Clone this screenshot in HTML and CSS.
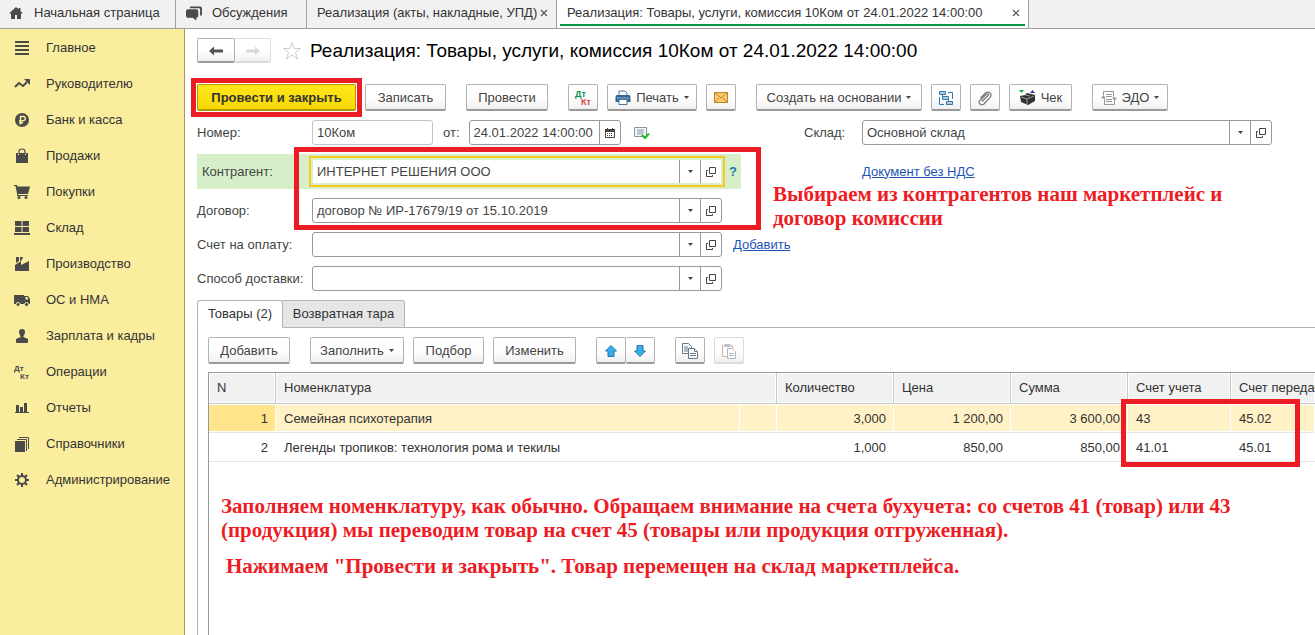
FILE: index.html
```html
<!DOCTYPE html>
<html lang="ru">
<head>
<meta charset="utf-8">
<title>Реализация: Товары, услуги, комиссия</title>
<link rel="stylesheet" href="styles.css">
</head>
<body>
<svg class="defs" aria-hidden="true">
  <symbol id="open" viewBox="0 0 10 10"><path d="M3.500.5h6v6h-6zM2 3.500H.5v6h6V8" fill="none" stroke="#444"/></symbol>
  <symbol id="down" viewBox="0 0 5 3"><path d="M0 0h5L2.500 3z" fill="#444"/></symbol>
</svg>
<nav class="tabs">
  <a class="tab tab-home" href="#"><svg class="ico" viewBox="0 0 16 16"><path d="M8 2 1 8.500h2V14h4v-4h2v4h4V8.500h2L12.500 6V3h-2v1.300z"/></svg>Начальная страница</a>
  <a class="tab tab-talk" href="#"><svg class="ico" viewBox="0 0 17 16"><path d="M5 1h10q2 0 2 2v6q0 2-2 2V4q0-1-1-1H4q0-2 1-2z"/><path d="M2 4h9q2 0 2 2v5q0 2-2 2v3l-4-3H2q-2 0-2-2V6q0-2 2-2z"/></svg>Обсуждения</a>
  <div class="tab tab-list"><a href="#">Реализация (акты, накладные, УПД)</a><button class="close" aria-label="Закрыть"><svg viewBox="0 0 8 8"><path d="m1 1 6 6M7 1 1 7" stroke="#555" stroke-width="1.200"/></svg></button></div>
  <div class="tab tab-active"><a href="#">Реализация: Товары, услуги, комиссия 10Ком от 24.01.2022 14:00:00</a><button class="close" aria-label="Закрыть"><svg viewBox="0 0 8 8"><path d="m1 1 6 6M7 1 1 7" stroke="#555" stroke-width="1.200"/></svg></button></div>
</nav>
<div class="shell">
  <nav class="side">
    <a href="#"><svg class="ico" viewBox="0 0 16 16"><path d="M1 1h14v2H1zM1 5h14v2H1zM1 9h14v2H1zM1 13h14v2H1z"/></svg>Главное</a>
    <a href="#"><svg class="ico" viewBox="0 0 16 16"><path d="m1 11 4-4 4 3 4-4" fill="none" stroke="#4a4a4a" stroke-width="2"/><path d="M10 3h6v6z"/></svg>Руководителю</a>
    <a href="#"><svg class="ico" viewBox="0 0 16 16"><circle cx="8" cy="8" r="7"/><path d="M6.500 12.500V4.500h2.700a2 2 0 0 1 0 4.200H5M5 10.700h4" fill="none" stroke="#fbed9e" stroke-width="1.400"/></svg>Банк и касса</a>
    <a href="#"><svg class="ico" viewBox="0 0 16 16"><path d="M2 5h2v2h1V5h6v2h1V5h2v10H2z"/><path d="M5 6V3.500q0-2.500 3-2.500t3 2.500V6" fill="none" stroke="#4a4a4a" stroke-width="1.200"/></svg>Продажи</a>
    <a href="#"><svg class="ico" viewBox="0 0 16 16"><path d="M0 1h3l.5 1.500H16L14 10H4v1h10v1H3V9.500L1.500 2H0z"/><circle cx="5" cy="13.500" r="1.500"/><circle cx="12" cy="13.500" r="1.500"/></svg>Покупки</a>
    <a href="#"><svg class="ico" viewBox="0 0 16 16"><path d="M1 1h6.500v5H1zM8.500 1H15v5H8.500zM1 7h6.500v5H1zM8.500 7H15v5H8.500zM0 13h16v2H0z"/></svg>Склад</a>
    <a href="#"><svg class="ico" viewBox="0 0 16 16"><path d="M1 15V9l6-4v4l8-4v10zM2 1h3v4L2 7zM6 1h3l-1 3-2 1z"/></svg>Производство</a>
    <a href="#"><svg class="ico" viewBox="0 0 16 16"><path d="M0 3h10v9H0z"/><path fill-rule="evenodd" d="M10 4h4l2 3v5h-6zm1.500 1v2.500h3L13.300 5z"/><g stroke="#fbed9e"><circle cx="4" cy="12.500" r="2"/><circle cx="12.500" cy="12.500" r="2"/></g></svg>ОС и НМА</a>
    <a href="#"><svg class="ico" viewBox="0 0 16 16"><path d="M8 1q3 0 3 3 0 2-1.500 4v1L14 11v3q0 1-1 1H3q-1 0-1-1v-3l4.500-2V8Q5 6 5 4q0-3 3-3z"/></svg>Зарплата и кадры</a>
    <a href="#"><svg class="ico dk" viewBox="0 0 16 16"><text x="0" y="7">Дт</text><text x="6" y="15">Кт</text></svg>Операции</a>
    <a href="#"><svg class="ico" viewBox="0 0 16 16"><path d="M2 5h3v7h1V7h3v5h1V3h3v9h2v1H1v-1h1z"/></svg>Отчеты</a>
    <a href="#"><svg class="ico" viewBox="0 0 16 16"><path d="M1 5h10v11H1z"/><path d="M3 3.500h9.500V15M5 1.500h9.500V13" fill="none" stroke="#4a4a4a"/></svg>Справочники</a>
    <a href="#"><svg class="ico" viewBox="0 0 16 16"><circle cx="8" cy="8" r="4" fill="none" stroke="#4a4a4a" stroke-width="2"/><path d="M8 1v3M8 12v3M1 8h3M12 8h3M3 3l2 2M11 11l2 2M13 3l-2 2M5 11l-2 2" stroke="#4a4a4a" stroke-width="2"/></svg>Администрирование</a>
  </nav>
  <main class="main">
    <header class="head">
      <div class="pair"><button class="btn nav-btn" aria-label="Назад"><svg width="14" height="10" viewBox="0 0 14 10"><path d="M0 5 5 .5v3h9v3H5v3z" fill="#555"/></svg></button><button class="btn nav-btn" disabled aria-label="Вперед"><svg width="14" height="10" viewBox="0 0 14 10"><path d="M14 5 9 .5v3H0v3h9v3z" fill="#d8d8d8"/></svg></button></div>
      <svg class="star" viewBox="0 0 20 20"><path d="m10 1.500 2.300 6h6.200l-5 4 2 6.500L10 14l-5.500 4 2-6.500-5-4h6.200z" fill="#fff" stroke="#ccc"/></svg>
      <h1>Реализация: Товары, услуги, комиссия 10Ком от 24.01.2022 14:00:00</h1>
    </header>
    <div class="bar">
      <span class="marked"><button class="btn primary">Провести и закрыть</button></span>
      <button class="btn w81">Записать</button>
      <button class="btn w82 apart">Провести</button>
      <button class="btn w30 apart" aria-label="Дт Кт"><svg class="dk color" width="18" height="18" viewBox="0 0 18 18"><text x="1" y="8" fill="#0a9150">Дт</text><text x="7" y="16" fill="#dd4444">Кт</text></svg></button>
      <button class="btn w90"><svg width="16" height="16" viewBox="0 0 16 16"><path d="M4 6V1h6l2 2v3" fill="#fff" stroke="#47729a"/><path d="M2 5h12q1.500 0 1.500 2v5H.5V7Q.5 5 2 5z" fill="#39658f"/><path d="M2 8h12" stroke="#88b5da"/><path d="M4 9.500h8v5H4z" fill="#fff" stroke="#47729a"/></svg>Печать<svg class="caret"><use href="#down"/></svg></button>
      <button class="btn w30" aria-label="Письмо"><svg width="14" height="11" viewBox="0 0 14 11"><path d="M.5.5h13v10H.5z" fill="#f8cb72" stroke="#c58220"/><path d="m1 1 6 5 6-5M1 10l4-4M13 10 9 6" fill="none" stroke="#c58220"/></svg></button>
      <button class="btn w166 apart">Создать на основании<svg class="caret"><use href="#down"/></svg></button>
      <button class="btn w30" aria-label="Структура"><svg width="16" height="16" viewBox="0 0 16 16" fill="#aecde3" stroke="#3679a5"><path d="M1.500 1.500h6v3h-6zM4.500 6.500h6v3h-6zM8.500 11.500h6v3h-6z"/><path d="M10 2.500h4.500V9M1.500 7v7.500H6M4.500 4.500v2M10.500 9.500v2" fill="none"/></svg></button>
      <button class="btn w30" aria-label="Файлы"><svg width="16" height="16" viewBox="0 0 16 16"><path d="m5 11 6-6q1-1 0-1.500T9 4l-6 6q-2 2 0 3.500t4 0l6-6.500q2-3 0-4.500T9 2L3.500 7.500" transform="translate(0 .5)" fill="none" stroke="#777" stroke-width="1.200"/></svg></button>
      <button class="btn w63"><svg width="17" height="16" viewBox="0 0 17 16"><path d="M0 0h5L2.500 3z" fill="#15a34a"/><path d="m11 3 2.500-3L16 3z" fill="#303da8"/><path d="m1 6 5-1 2-2 8 2v6l-7 4-7-3z" fill="#333"/><path d="m2 7 6 2 7-3M8 9v5M6 5l5 1" fill="none" stroke="#999"/></svg>Чек</button>
      <button class="btn w76 apart"><svg width="16" height="16" viewBox="0 0 16 16" fill="none" stroke="#999"><path d="M2.500 5V1.500h10V7M13.500 10v4.500h-10V9M5 4.500h6M5 6.500h6M5 9.500h6M5 11.500h6"/><path d="M0 8.500h5L2.500 5zM11 7.500h5L13.500 11z" fill="#999" stroke="none"/></svg>ЭДО<svg class="caret"><use href="#down"/></svg></button>
    </div>

    <form class="form">
      <div class="row">
        <div class="half">
          <label for="num">Номер:</label>
          <div class="inline"><input id="num" class="box num" value="10Ком"><label for="date">от:</label>
            <span class="combo date"><input id="date" value="24.01.2022 14:00:00"><button type="button" aria-label="Календарь"><svg width="10" height="10" viewBox="0 0 10 10"><path d="M.5 1.500h9v8h-9z" fill="#fff" stroke="#444"/><path d="M0 1h10v3H0zM2 0h1v1H2zM7 0h1v1H7zM2 5h1v1H2zM4 5h1v1H4zM6 5h1v1H6zM2 7h1v1H2zM4 7h1v1H4zM6 7h1v1H6z" fill="#444"/></svg></button></span>
            <svg width="16" height="14" viewBox="0 0 16 14"><path d="M.5 1.500h12v9H.5zM3 4h7M3 6h7M3 8h6" fill="#f5f8fb" stroke="#8497a8"/><path d="m8 9 3 3 4-4.500" fill="none" stroke="#2bb52e" stroke-width="2"/></svg>
          </div>
        </div>
        <label class="stock-label" for="stock">Склад:</label>
        <span class="combo stock"><input id="stock" value="Основной склад"><button type="button" aria-label="Выбрать"><svg class="caret"><use href="#down"/></svg></button><button type="button" aria-label="Открыть"><svg class="open"><use href="#open"/></svg></button></span>
      </div>
      <div class="row">
        <div class="half current">
          <label for="agent">Контрагент:</label>
          <span class="combo focus"><input id="agent" value="ИНТЕРНЕТ РЕШЕНИЯ ООО"><button type="button" aria-label="Выбрать"><svg class="caret"><use href="#down"/></svg></button><button type="button" aria-label="Открыть"><svg class="open"><use href="#open"/></svg></button></span>
          <a class="help" href="#">?</a>
        </div>
        <a class="vat" href="#">Документ без НДС</a>
      </div>
      <div class="row">
        <div class="half">
          <label for="deal">Договор:</label>
          <span class="combo"><input id="deal" value="договор № ИР-17679/19 от 15.10.2019"><button type="button" aria-label="Выбрать"><svg class="caret"><use href="#down"/></svg></button><button type="button" aria-label="Открыть"><svg class="open"><use href="#open"/></svg></button></span>
        </div>
      </div>
      <div class="row">
        <div class="half">
          <label for="bill">Счет на оплату:</label>
          <span class="combo"><input id="bill"><button type="button" aria-label="Выбрать"><svg class="caret"><use href="#down"/></svg></button><button type="button" aria-label="Открыть"><svg class="open"><use href="#open"/></svg></button></span>
          <a class="add" href="#">Добавить</a>
        </div>
      </div>
      <div class="row">
        <div class="half">
          <label for="ship">Способ доставки:</label>
          <span class="combo"><input id="ship"><button type="button" aria-label="Выбрать"><svg class="caret"><use href="#down"/></svg></button><button type="button" aria-label="Открыть"><svg class="open"><use href="#open"/></svg></button></span>
        </div>
      </div>
      <div class="frame frame-form"></div>
      <p class="note note-form">Выбираем из контрагентов наш маркетплейс и<br>договор комиссии</p>
    </form>

    <div class="sheets"><button class="sheet on">Товары (2)</button><button class="sheet">Возвратная тара</button></div>
    <section class="panel">
      <div class="bar">
        <button class="btn w82">Добавить</button>
        <button class="btn w94 apart">Заполнить<svg class="caret"><use href="#down"/></svg></button>
        <button class="btn w71">Подбор</button>
        <button class="btn w83">Изменить</button>
        <div class="pair apart"><button class="btn w30" aria-label="Вверх"><svg width="12" height="12" viewBox="0 0 12 12"><path d="m6 .5 5.500 5.500H9v5.500H3V6H.5z" fill="#36aeea" stroke="#2776a8"/></svg></button><button class="btn w30" aria-label="Вниз"><svg width="12" height="12" viewBox="0 0 12 12"><path d="M6 11.500.5 6H3V.5h6V6h2.500z" fill="#36aeea" stroke="#2776a8"/></svg></button></div>
        <button class="btn w30 apart" aria-label="Копировать"><svg width="16" height="16" viewBox="0 0 16 16" fill="#fff" stroke="#66788a"><path d="M.5.5h6l3 3v7h-9zM2 4h4M2 6h4M2 8h4"/><path d="M6.500 5.500h6l3 3v7h-9z"/><path d="M12.500 5.500v3h3M8 10.500h6M8 12.500h6"/></svg></button>
        <button class="btn w30" disabled aria-label="Вставить"><svg width="16" height="16" viewBox="0 0 16 16" fill="#fff" stroke="#b0bcc6"><path d="M1.500 2.500h10v11h-10z" stroke="#dcaf94"/><path d="M4 1.500h5v2H4z" fill="#ccc"/><path d="M6.500 5.500h5l3 3v7h-8z"/><path d="M8 10.500h5M8 12.500h5"/></svg></button>
      </div>
      <div class="grid">
        <table>
          <colgroup><col class="c-n"><col><col class="c-x"><col class="c-v"><col class="c-v"><col class="c-v"><col class="c-a"><col class="c-t"></colgroup>
          <thead><tr><th>N</th><th colspan="2">Номенклатура</th><th>Количество</th><th>Цена</th><th>Сумма</th><th>Счет учета</th><th>Счет передачи</th></tr></thead>
          <tbody>
            <tr class="sel"><td class="r">1</td><td>Семейная психотерапия</td><td></td><td class="r">3,000</td><td class="r">1 200,00</td><td class="r">3 600,00</td><td>43</td><td>45.02</td></tr>
            <tr><td class="r">2</td><td>Легенды тропиков: технология рома и текилы</td><td></td><td class="r">1,000</td><td class="r">850,00</td><td class="r">850,00</td><td>41.01</td><td>45.01</td></tr>
          </tbody>
        </table>
        <div class="frame frame-grid"></div>
        <div class="note note-grid">
          <p>Заполняем номенклатуру, как обычно. Обращаем внимание на счета бухучета: со счетов 41 (товар) или 43<br>(продукция) мы переводим товар на счет 45 (товары или продукция отгруженная).</p>
          <p class="last">Нажимаем "Провести и закрыть". Товар перемещен на склад маркетплейса.</p>
        </div>
      </div>
    </section>
  </main>
</div>
</body>
</html>
```

FILE: styles.css
```css
* { box-sizing: border-box; }
body {
  margin: 0;
  min-height: 100vh;
  display: flex;
  flex-direction: column;
  overflow-x: hidden;
  background: #fff;
  color: #333;
  font: 13px/16px "Liberation Sans", Arial, sans-serif;
}
button, input { font: inherit; color: inherit; margin: 0; }
p, h1 { margin: 0; }
svg { flex: none; }
.defs { position: absolute; width: 0; height: 0; }
.ico { width: 16px; height: 16px; fill: #4a4a4a; }
.dk text { font: bold 8px "Liberation Sans", Arial, sans-serif; }
.dk.color text { font-size: 9px; }
.caret { width: 5px; height: 3px; }
.open { width: 10px; height: 10px; }

/* window tabs */
.tabs { display: flex; height: 29px; background: #f1f1f1; border-bottom: 1px solid #a0a0a0; }
.tab {
  display: flex; align-items: center; flex: none;
  padding: 0 8px 3px 10px;
  border-right: 1px solid #a0a0a0;
  color: #333; text-decoration: none; white-space: nowrap;
}
.tab a { color: inherit; text-decoration: none; flex: 1; }
.tab-home { width: 176px; gap: 10px; padding-left: 8px; }
.tab-talk { width: 131px; gap: 10px; }
.tab-list { width: 250px; }
.tab-active { width: 472px; background: linear-gradient(#009646, #009646) 3px 24px / 465px 2px no-repeat #fff; }
.close { width: 8px; height: 8px; padding: 0; border: 0; background: none; display: flex; }

.shell { display: flex; flex: 1; }
.side { flex: 0 0 185px; padding-top: 1px; background: #fbed9e; border-right: 1px solid #a09868; }
.side a {
  display: flex; align-items: center; gap: 16px;
  height: 36px; padding-left: 14px;
  color: #333; text-decoration: none; white-space: nowrap;
}

.main { flex: 1; min-width: 0; padding: 9px 0 0 12px; display: flex; flex-direction: column; }
.head { display: flex; align-items: center; height: 25px; }
.head h1 { font-size: 19px; line-height: 24px; font-weight: normal; color: #000; white-space: nowrap; }
.star { width: 20px; height: 20px; margin: 0 8px 0 11px; }

/* buttons */
.btn {
  display: inline-flex; align-items: center; justify-content: center; gap: 5px;
  height: 27px; padding: 1px 0 0; flex: none;
  border: 1px solid #b3b3b3; border-bottom: 2px solid #999; border-radius: 2px;
  background: linear-gradient(#fff 50%, #f0f0f0);
  color: #444; white-space: nowrap;
}
.btn:disabled { border-color: #dcdcdc; }
.pair { display: flex; }
.pair .btn + .btn { border-left-width: 0; }
.nav-btn { width: 38px; height: 25px; }
.pair .nav-btn + .nav-btn { width: 36px; }
.pair .w30 + .w30 { width: 29px; }
.primary { width: 159px; background: linear-gradient(#ffe71c, #f7d900); border-color: #b09a00; color: #333; font-weight: bold; }
.w30 { width: 30px; }
.w63 { width: 63px; }
.w71 { width: 71px; }
.w76 { width: 76px; }
.w81 { width: 81px; }
.w82 { width: 82px; }
.w83 { width: 83px; }
.w90 { width: 90px; }
.w94 { width: 94px; }
.w166 { width: 166px; }
.bar { display: flex; gap: 9px; margin-top: 21px; }
.bar .apart { margin-left: 11px; }
.marked { position: relative; display: flex; }
.marked::after { content: ""; position: absolute; inset: -6px; border: 5px solid #ed1c24; pointer-events: none; z-index: 1; }

/* document fields */
.form { position: relative; display: flex; flex-direction: column; gap: 9px; margin-top: 9px; color: #444; }
.row { display: flex; align-items: center; }
.half { display: grid; grid-template-columns: 115px 410px 1fr; align-items: center; flex: 0 0 607px; }
.current { flex-basis: 544px; margin-right: 121px; height: 35px; background: #d7efc9; }
.current label { padding-left: 5px; }
.inline { display: flex; align-items: center; }
.inline label { margin: 0 9px 0 10px; }
.inline > svg { margin-left: 13px; }
.combo, .box { display: flex; height: 25px; border: 1px solid #999; border-radius: 3px; background: #fff; }
.box { border-color: #c4c4c4; padding: 0 4px; }
.num { width: 121px; }
.date { width: 152px; flex: none; }
.combo input { flex: 1; min-width: 0; border: 0; padding: 0 4px; background: none; outline: none; }
.combo button { width: 21px; padding: 0; border: 0; border-left: 1px solid #999; background: none; display: flex; align-items: center; justify-content: center; }
.focus { border-color: #d7efc9; border-radius: 0; outline: 2px solid #fac81e; outline-offset: 1px; }
.stock-label { flex: 0 0 58px; }
.stock { flex: 0 1 410px; }
a { color: #1d55b4; }
.help { padding-left: 7px; font-weight: bold; text-decoration: none; color: #1e78a8; }
.add { padding-left: 11px; }

/* notes laid over the window */
.frame { position: absolute; border: 5px solid #ed1c24; pointer-events: none; }
.frame-form { left: 97px; top: 27px; width: 467px; height: 83px; }
.frame-grid { right: 15px; top: 26px; width: 179px; height: 68px; }
.note { position: absolute; color: #ed1c24; font: bold 21px/24px "Liberation Serif", "Times New Roman", serif; white-space: nowrap; }
.note-form { left: 576px; top: 62px; }
.note-grid { left: 12px; top: 121px; }
.note-grid .last { margin: 12px 0 0 5px; }

/* table part */
.sheets { display: flex; height: 28px; margin-top: 9px; border-bottom: 1px solid #b3b3b3; }
.sheet { height: 28px; width: 122px; padding: 0; border: 1px solid #b3b3b3; border-left: 0; border-radius: 0 3px 0 0; background: #e6e6e6; }
.sheet.on { width: 86px; border-left: 1px solid #b3b3b3; border-bottom-color: #fff; border-radius: 3px 3px 0 0; background: #fff; }
.panel { flex: 1; display: flex; flex-direction: column; border-left: 1px solid #b3b3b3; padding-left: 10px; }
.panel .bar { margin-top: 9px; }
.grid { position: relative; flex: 1; margin-top: 8px; border: 1px solid #999; border-width: 1px 0 0 1px; }
table { width: 100%; table-layout: fixed; border-collapse: separate; border-spacing: 0; }
.c-n { width: 67px; }
.c-x { width: 37px; }
.c-v { width: 117px; }
.c-a { width: 103px; }
.c-t { width: 84px; }
th { height: 31px; padding: 0 0 0 8px; text-align: left; font-weight: normal; background: #f1f1f1; border-right: 1px solid #c6c6c6; border-bottom: 1px solid #c6c6c6; box-shadow: inset 0 0 0 1px #fff; white-space: nowrap; overflow: hidden; }
td { height: 29px; padding: 1px 8px 0; border-bottom: 1px solid #e4e4e4; white-space: nowrap; }
th:last-child { border-right: 0; }
.r { text-align: right; }
.sel td { background: #fff2c6; border-right: 1px solid #fff; box-shadow: inset 0 1px #fff, inset 0 -1px #fff; padding-right: 7px; }
.sel td:first-child { background: #ffe48b; }
```
